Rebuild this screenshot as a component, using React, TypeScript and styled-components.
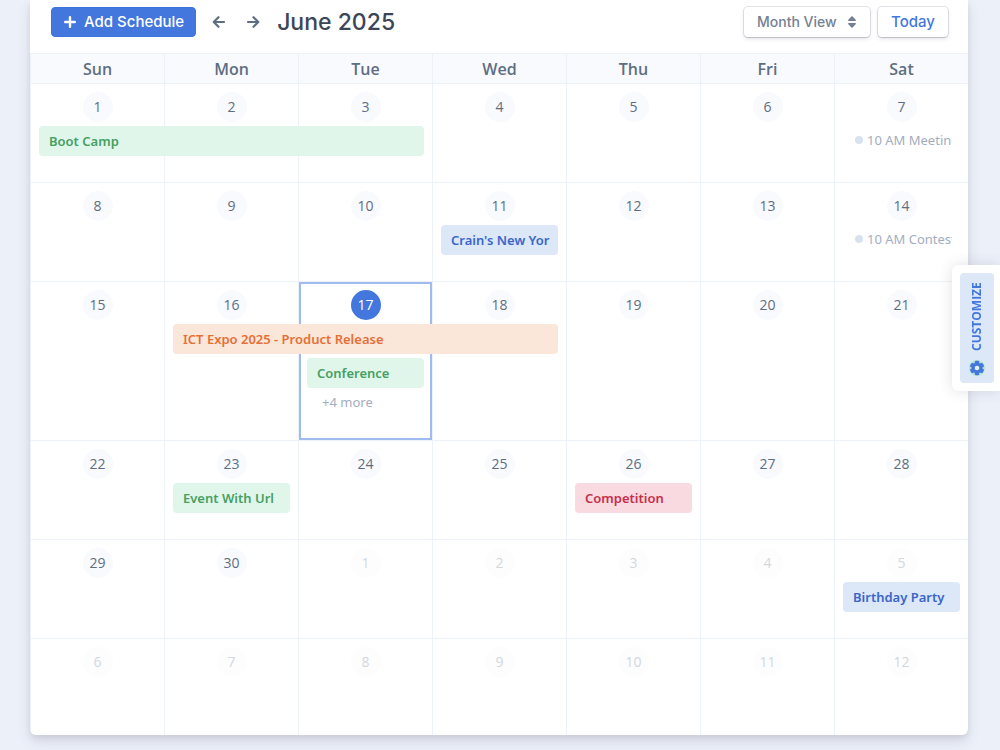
import React from "react";
import styled, { createGlobalStyle, css } from "styled-components";

const GlobalStyle = createGlobalStyle`
  *, *::before, *::after { box-sizing: border-box; }
  body {
    margin: 0;
    background: #ecf0f9;
    color: #5e6e82;
    font-family: "Open Sans", "Noto Sans", sans-serif;
    font-size: 14px;
    line-height: 20px;
  }
  button, select { font: inherit; margin: 0; cursor: pointer; }
`;

const display = css`
  font-family: Inter, "Open Sans", sans-serif;
  font-weight: 500;
`;

const eventText = css`
  font-family: "Noto Sans", "Open Sans", sans-serif;
  font-size: 13px;
`;

const Page = styled.main`
  padding: 0 32px 15px 30px;
`;

const Card = styled.section`
  background: #fff;
  border-radius: 0 0 6px 6px;
  box-shadow: 0 7px 14px 0 rgba(65, 69, 88, 0.12), 0 3px 6px 0 rgba(0, 0, 0, 0.08);
  overflow: hidden;
`;

const Toolbar = styled.header`
  display: flex;
  align-items: center;
  padding: 7px 20px 16px 21px;
`;

const AddButton = styled.button`
  ${display}
  display: flex;
  align-items: center;
  gap: 8px;
  height: 30px;
  padding: 0 11px 0 12px;
  border: 1px solid #3f74dc;
  border-radius: 4px;
  background: #4377de;
  color: #fff;
  font-size: 15px;
  white-space: nowrap;
`;

const Arrows = styled.div`
  display: flex;
  gap: 2px;
  margin: 0 8px 0 7px;
`;

const ArrowButton = styled.button`
  display: flex;
  align-items: center;
  justify-content: center;
  width: 32px;
  height: 30px;
  padding: 0;
  border: 0;
  background: none;
  color: #5e6e82;
`;

const Title = styled.h1`
  ${display}
  flex: 1;
  margin: 0;
  color: #3c4656;
  font-size: 23px;
  line-height: 30px;
  white-space: nowrap;
`;

const raised = css`
  ${display}
  height: 30px;
  border: 0;
  border-radius: 4px;
  background: #fff;
  box-shadow: 0 0 0 1px rgba(43, 45, 80, 0.12), 0 2px 4px 0 rgba(43, 45, 80, 0.12), 0 1px 1px 0 rgba(0, 0, 0, 0.1);
`;

const SelectBox = styled.label`
  display: grid;
  align-items: center;
  margin-right: 8px;
  color: #748194;

  & > * { grid-area: 1 / 1; }
  svg { justify-self: end; margin-right: 14px; pointer-events: none; }
`;

const Select = styled.select`
  ${raised}
  appearance: none;
  width: 126px;
  padding: 0 13px;
  color: #748194;
  font-size: 14px;
`;

const TodayButton = styled.button`
  ${raised}
  width: 70px;
  padding: 0;
  color: #4377de;
  font-size: 15px;
`;

const Calendar = styled.table`
  width: 100%;
  table-layout: fixed;
  border-collapse: separate;
  border-spacing: 0;
`;

const DayName = styled.th`
  height: 31px;
  padding: 0;
  border: solid #edf2f9;
  border-width: 1px 0 1px 1px;
  background: #f9fafd;
  color: #5e6e82;
  font-size: 16px;
  font-weight: 600;
  line-height: 28px;
`;

const Week = styled.tr<{ $tall?: boolean }>`
  height: ${(p) => (p.$tall ? 159 : 99)}px;

  &:last-child { height: 96px; }
`;

const Cell = styled.td<{ $today?: boolean }>`
  padding: 8px 0 0;
  border: solid #edf2f9;
  border-width: 0 0 1px 1px;
  vertical-align: top;
  box-shadow: ${(p) => (p.$today ? "inset 0 0 0 2px #a0bbef" : "none")};

  ${Week}:last-child & { border-bottom: 0; }
`;

const DayNumber = styled.time<{ $tone: "normal" | "muted" | "today" }>`
  display: block;
  width: 30px;
  margin: 0 auto;
  border-radius: 50%;
  background: ${(p) => ({ normal: "#f9fafd", muted: "#fdfdfe", today: "#4377de" })[p.$tone]};
  color: ${(p) => ({ normal: "#5e6e82", muted: "#d3d7de", today: "#fff" })[p.$tone]};
  line-height: 30px;
  text-align: center;
`;

type Tone = "green" | "blue" | "orange" | "red";
const tones: Record<Tone, [string, string]> = {
  green: ["#e0f6eb", "#479f62"],
  blue: ["#dce7f8", "#3966c8"],
  orange: ["#fae7da", "#e66f37"],
  red: ["#f8dae0", "#c62f4b"],
};

const EventLink = styled.a<{ $tone: Tone; $span: number; $slot: number }>`
  ${eventText}
  display: block;
  position: relative;
  z-index: 1;
  width: calc(${(p) => p.$span * 100}% + ${(p) => p.$span - 1}px - 16px);
  height: 30px;
  margin: ${(p) => p.$slot * 34 + 4}px 8px 0;
  padding: 0 8px 0 10px;
  border-radius: 4px;
  background: ${(p) => tones[p.$tone][0]};
  color: ${(p) => tones[p.$tone][1]};
  font-weight: 600;
  line-height: 30px;
  text-decoration: none;
`;

const Clip = styled.span`
  display: block;
  overflow: hidden;
  white-space: nowrap;
`;

const TimedLink = styled.a`
  ${eventText}
  display: flex;
  align-items: center;
  gap: 4px;
  height: 28px;
  margin: 4px 16px 0 20px;
  color: #a3adc0;
  text-decoration: none;
`;

const Dot = styled.span`
  flex: none;
  width: 8px;
  height: 8px;
  border-radius: 50%;
  background: #d8e2ef;
`;

const MoreButton = styled.button`
  ${eventText}
  display: block;
  margin: 4px 0 0 23px;
  padding: 0;
  border: 0;
  background: none;
  color: #a3adc0;
`;

const CustomizeTab = styled.aside`
  position: fixed;
  top: 265px;
  right: 0;
  z-index: 2;
  padding: 8px 6px 8px 8px;
  border-radius: 6px 0 0 6px;
  background: #fff;
  box-shadow: 0 0 14px rgba(65, 69, 88, 0.16);
`;

const CustomizeButton = styled.button`
  display: flex;
  align-items: center;
  gap: 9px;
  width: 34px;
  height: 110px;
  padding: 7px 0;
  border: 0;
  border-radius: 4px;
  background: #dce7f8;
  color: #4377de;
  font-size: 12px;
  font-weight: 700;
  line-height: 34px;
  writing-mode: vertical-rl;
  transform: rotate(180deg);
`;

interface CalendarEvent {
  label: string;
  tone?: Tone;
  span?: number;
  slot?: number;
}

const events: Record<string, CalendarEvent> = {
  "2025-06-01": { label: "Boot Camp", tone: "green", span: 3 },
  "2025-06-07": { label: "10 AM Meeting" },
  "2025-06-11": { label: "Crain's New York Business", tone: "blue" },
  "2025-06-14": { label: "10 AM Contest" },
  "2025-06-16": { label: "ICT Expo 2025 - Product Release", tone: "orange", span: 3 },
  "2025-06-17": { label: "Conference", tone: "green", slot: 1 },
  "2025-06-23": { label: "Event With Url", tone: "green" },
  "2025-06-26": { label: "Competition", tone: "red" },
  "2025-07-05": { label: "Birthday Party", tone: "blue" },
};
const today = "2025-06-17";

const dayNames = ["Sun", "Mon", "Tue", "Wed", "Thu", "Fri", "Sat"];
const days = Array.from({ length: 42 }, (_, i) => {
  const july = i >= 30;
  const day = july ? i - 29 : i + 1;
  return { day, july, iso: `2025-0${july ? 7 : 6}-${String(day).padStart(2, "0")}` };
});
const weeks = [0, 1, 2, 3, 4, 5].map((w) => days.slice(w * 7, w * 7 + 7));

function PlusIcon() {
  return (
    <svg width="12" height="12" viewBox="0 0 12 12" stroke="currentColor" strokeWidth="2.4" strokeLinecap="round" aria-hidden="true">
      <path d="M6 1.200V10.800M1.200 6H10.800" />
    </svg>
  );
}

function ArrowIcon({ flip = false }: { flip?: boolean }) {
  return (
    <svg width="14" height="14" viewBox="0 0 14 14" fill="none" stroke="currentColor" strokeWidth="2.2" strokeLinecap="round" strokeLinejoin="round" aria-hidden="true">
      {flip ? (
        <path d="M2 7H12M7.500 2.200 12.300 7l-4.800 4.800" />
      ) : (
        <path d="M12 7H2M6.500 2.200 1.700 7l4.800 4.800" />
      )}
    </svg>
  );
}

function SortIcon() {
  return (
    <svg width="8" height="12" viewBox="0 0 8 12" fill="currentColor" aria-hidden="true">
      <path d="M.8 5C.1 5-.2 4.200.3 3.700L3.400.600C3.700.200 4.300.200 4.600.600L7.700 3.700C8.200 4.200 7.900 5 7.200 5ZM.8 7C.1 7-.2 7.800.3 8.300L3.400 11.400C3.700 11.800 4.300 11.800 4.600 11.400L7.700 8.300C8.200 7.800 7.900 7 7.200 7Z" />
    </svg>
  );
}

function GearIcon() {
  return (
    <svg width="16" height="16" viewBox="0 0 16 16" aria-hidden="true">
      <circle cx="8" cy="8" r="8" fill="#b4e2d2" />
      <g fill="#4377de">
        {[0, 60, 120].map((a) => (
          <rect key={a} x="5.800" y="0.800" width="4.400" height="14.400" rx="1.200" transform={`rotate(${a} 8 8)`} />
        ))}
        <circle cx="8" cy="8" r="5.400" />
      </g>
      <circle cx="8" cy="8" r="2.300" fill="#e6f2fa" />
    </svg>
  );
}

function DayEvent({ event }: { event: CalendarEvent }) {
  if (!event.tone) {
    return (
      <TimedLink href="#event">
        <Dot />
        <Clip>{event.label}</Clip>
      </TimedLink>
    );
  }
  return (
    <EventLink href="#event" $tone={event.tone} $span={event.span ?? 1} $slot={event.slot ?? 0}>
      <Clip>{event.label}</Clip>
    </EventLink>
  );
}

export default function App() {
  return (
    <>
      <GlobalStyle />
      <Page>
        <Card>
          <Toolbar>
            <AddButton type="button">
              <PlusIcon />
              Add Schedule
            </AddButton>
            <Arrows>
              <ArrowButton type="button" aria-label="Previous">
                <ArrowIcon />
              </ArrowButton>
              <ArrowButton type="button" aria-label="Next">
                <ArrowIcon flip />
              </ArrowButton>
            </Arrows>
            <Title>June 2025</Title>
            <SelectBox>
              <Select aria-label="Calendar view" defaultValue="month">
                <option value="month">Month View</option>
                <option value="week">Week View</option>
                <option value="day">Day View</option>
              </Select>
              <SortIcon />
            </SelectBox>
            <TodayButton type="button">Today</TodayButton>
          </Toolbar>
          <Calendar>
            <thead>
              <tr>
                {dayNames.map((name) => (
                  <DayName key={name} scope="col">{name}</DayName>
                ))}
              </tr>
            </thead>
            <tbody>
              {weeks.map((week) => (
                <Week key={week[0].iso} $tall={week.some((d) => d.iso === today)}>
                  {week.map(({ day, july, iso }) => (
                    <Cell key={iso} $today={iso === today}>
                      <DayNumber dateTime={iso} $tone={iso === today ? "today" : july ? "muted" : "normal"}>
                        {day}
                      </DayNumber>
                      {events[iso] && <DayEvent event={events[iso]} />}
                      {iso === today && <MoreButton type="button">+4 more</MoreButton>}
                    </Cell>
                  ))}
                </Week>
              ))}
            </tbody>
          </Calendar>
        </Card>
      </Page>
      <CustomizeTab>
        <CustomizeButton type="button">
          <GearIcon />
          CUSTOMIZE
        </CustomizeButton>
      </CustomizeTab>
    </>
  );
}
